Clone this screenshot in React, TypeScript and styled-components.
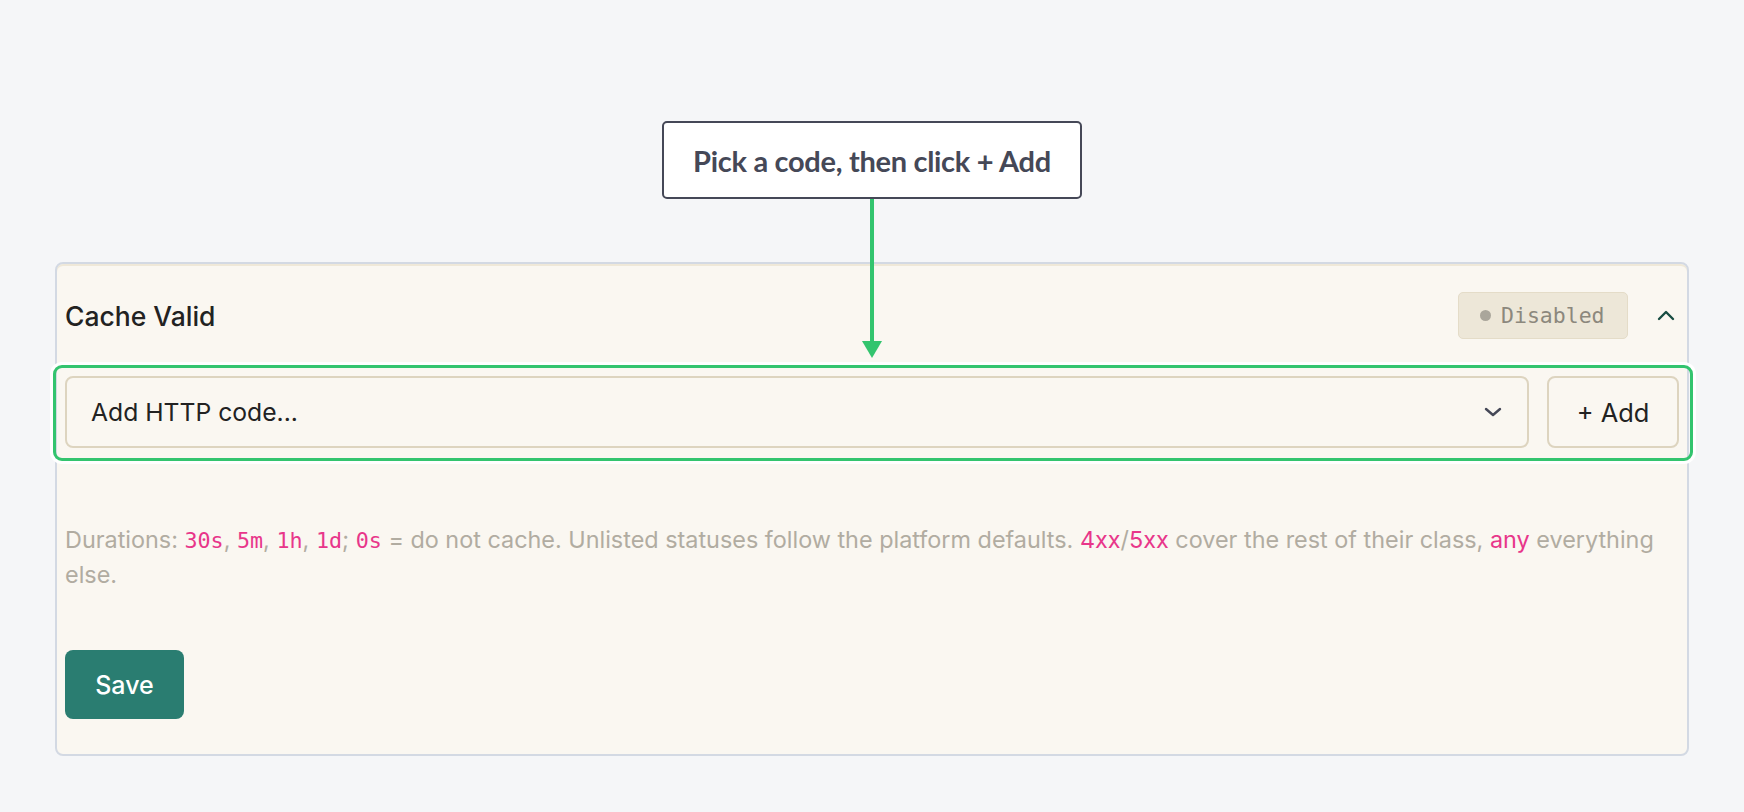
import styled, { createGlobalStyle } from "styled-components";

const GlobalStyle = createGlobalStyle`
  html, body {
    margin: 0;
    padding: 0;
    background: #f5f6f8;
    font-family: Inter, "Noto Sans", sans-serif;
  }
  * {
    box-sizing: border-box;
  }
`;

const Page = styled.div`
  position: relative;
  min-height: 812px;
  padding: 262px 55px 0;
`;

const Callout = styled.div`
  position: absolute;
  top: 121px;
  left: 50%;
  transform: translateX(-50%);
  width: 420px;
  height: 78px;
  display: flex;
  align-items: center;
  justify-content: center;
  background: #ffffff;
  border: 2px solid #454857;
  border-radius: 5px;
  color: #454857;
  font-family: Lato, "Open Sans", sans-serif;
  font-weight: 700;
  font-size: 29px;
  letter-spacing: -0.3px;
  z-index: 2;
`;

const Pointer = styled.div`
  position: absolute;
  top: 199px;
  left: 50%;
  width: 4px;
  height: 142px;
  margin-left: -2px;
  background: #33c46e;
  z-index: 2;

  &::after {
    content: "";
    position: absolute;
    left: -8px;
    bottom: -17px;
    border-left: 10px solid transparent;
    border-right: 10px solid transparent;
    border-top: 17px solid #33c46e;
  }
`;

const Card = styled.section`
  background: #faf7f1;
  border: 2px solid #d3d9e3;
  border-radius: 8px;
  padding: 0 8px 35px;
  box-shadow: inset 0 2px 0 #efe8d8;
`;

const Header = styled.div`
  display: flex;
  align-items: center;
  justify-content: space-between;
  padding: 28px 0;
`;

const Title = styled.h2`
  margin: 0;
  font-size: 26.5px;
  font-weight: 500;
  color: #222222;
`;

const HeaderSide = styled.div`
  display: flex;
  align-items: center;
  gap: 26px;
`;

const Badge = styled.span`
  display: inline-flex;
  align-items: center;
  gap: 10px;
  height: 47px;
  width: 170px;
  padding: 0 20px 0 21px;
  background: #ede7d8;
  border: 1.5px solid #e4dcc8;
  border-radius: 5px;
  font-family: "DejaVu Sans Mono", "Liberation Mono", monospace;
  font-size: 21.5px;
  color: #8c887d;
`;

const Dot = styled.span`
  width: 11px;
  height: 11px;
  border-radius: 50%;
  background: #aaa69b;
`;

const Toggle = styled.button`
  display: flex;
  align-items: center;
  justify-content: center;
  width: 24px;
  height: 24px;
  margin-right: 1px;
  padding: 0;
  border: none;
  background: none;
  color: #184d43;
`;

const AddRow = styled.div`
  position: relative;
  display: flex;
  gap: 18px;
  margin-top: 9px;

  &::after {
    content: "";
    position: absolute;
    inset: -11px -14px -13px -12px;
    border: 3px solid #33c46e;
    border-radius: 9px;
    box-shadow: 0 0 0 3px #ffffff;
    pointer-events: none;
  }
`;

const Select = styled.div`
  flex: 1;
  display: flex;
  align-items: center;
  justify-content: space-between;
  height: 72px;
  padding: 0 25px 0 24px;
  background: #faf7f1;
  border: 2px solid #ddd4bf;
  border-radius: 8px;
  font-size: 24.7px;
  color: #222222;
`;

const AddButton = styled.button`
  width: 132px;
  height: 72px;
  background: #faf7f1;
  border: 2px solid #ddd4bf;
  border-radius: 8px;
  font-family: Inter, "Noto Sans", sans-serif;
  font-size: 25.4px;
  color: #222222;
`;

const Hint = styled.p`
  margin: 75px 0 0;
  font-size: 23.4px;
  line-height: 34.5px;
  color: #b1aca1;
`;

const Code = styled.code`
  font-family: "DejaVu Sans Mono", "Liberation Mono", monospace;
  font-size: 21.7px;
  line-height: 1;
  color: #e8368a;
`;

const Accent = styled.span`
  color: #e8368a;
`;

const SaveButton = styled.button`
  display: block;
  margin-top: 58px;
  width: 119px;
  height: 69px;
  background: #2a7d71;
  border: none;
  border-radius: 8px;
  font-family: Inter, "Noto Sans", sans-serif;
  font-size: 25px;
  font-weight: 500;
  color: #ffffff;
`;

const ChevronDown = () => (
  <svg width="18" height="10" viewBox="0 0 18 10" fill="none">
    <path d="M2 2l7 6 7-6" stroke="#454857" strokeWidth="2.4" strokeLinecap="round" strokeLinejoin="round" />
  </svg>
);

const ChevronUp = () => (
  <svg width="18" height="11" viewBox="0 0 18 11" fill="none">
    <path d="M2 9l7-7 7 7" stroke="currentColor" strokeWidth="2.4" strokeLinecap="round" strokeLinejoin="round" />
  </svg>
);

export default function App() {
  return (
    <>
      <GlobalStyle />
      <Page>
        <Callout>Pick a code, then click + Add</Callout>
        <Pointer />
        <Card>
          <Header>
            <Title>Cache Valid</Title>
            <HeaderSide>
              <Badge>
                <Dot />
                Disabled
              </Badge>
              <Toggle aria-label="Collapse">
                <ChevronUp />
              </Toggle>
            </HeaderSide>
          </Header>
          <AddRow>
            <Select>
              <span>Add HTTP code...</span>
              <ChevronDown />
            </Select>
            <AddButton>+ Add</AddButton>
          </AddRow>
          <Hint>
            Durations: <Code>30s</Code>, <Code>5m</Code>, <Code>1h</Code>, <Code>1d</Code>;{" "}
            <Code>0s</Code> = do not cache. Unlisted statuses follow the platform defaults.{" "}
            <Accent>4xx</Accent>/<Accent>5xx</Accent> cover the rest of their class,{" "}
            <Accent>any</Accent> everything else.
          </Hint>
          <SaveButton>Save</SaveButton>
        </Card>
      </Page>
    </>
  );
}
